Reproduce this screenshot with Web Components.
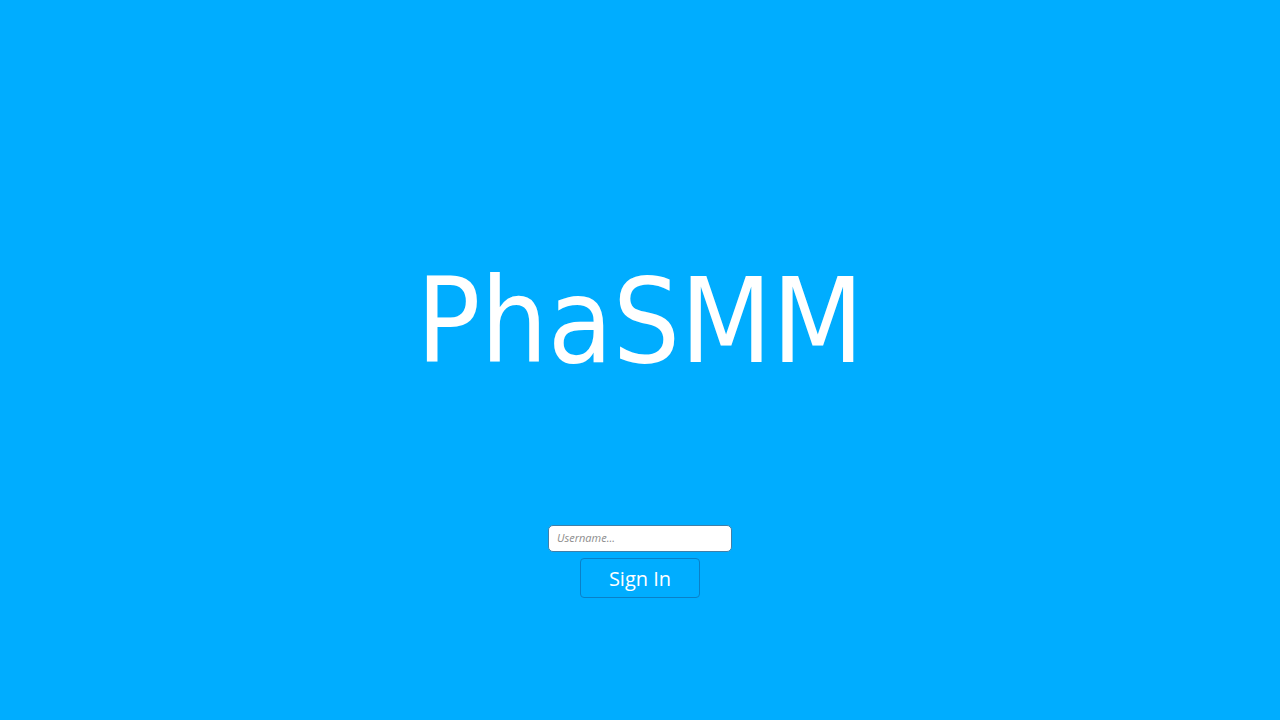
<!DOCTYPE html>
<html lang="en">
<head>
<meta charset="utf-8">
<meta name="viewport" content="width=device-width, initial-scale=1">
<title>PhaSMM</title>
<style>
  body { margin: 0; background: #00adff; font-family: "Open Sans", sans-serif; }
</style>
</head>
<body>
<login-screen>
  <brand-title slot="brand">PhaSMM</brand-title>
  <sign-in-form>Sign In</sign-in-form>
</login-screen>
<script>
class LoginScreen extends HTMLElement {
  constructor() {
    super();
    this.attachShadow({ mode: "open" }).innerHTML = `
      <style>
        :host { display: block; color: #fff; }
        main {
          box-sizing: border-box;
          min-height: 100vh;
          padding: 16px 16px 17vh;
          display: flex;
          flex-direction: column;
          align-items: center;
          justify-content: flex-end;
          gap: 140px;
        }
      </style>
      <main><slot name="brand"></slot><slot></slot></main>`;
  }
}
customElements.define("login-screen", LoginScreen);

class BrandTitle extends HTMLElement {
  constructor() {
    super();
    this.attachShadow({ mode: "open" }).innerHTML = `
      <style>
        :host { display: block; }
        h1 {
          margin: 0;
          font: 400 118px/128px "DejaVu Sans Condensed", "DejaVu Sans", sans-serif;
        }
      </style>
      <h1><slot></slot></h1>`;
  }
}
customElements.define("brand-title", BrandTitle);

class SignInForm extends HTMLElement {
  constructor() {
    super();
    this.attachShadow({ mode: "open" }).innerHTML = `
      <style>
        :host { display: block; }
        form { display: flex; flex-direction: column; align-items: center; gap: 6px; }
        input {
          box-sizing: border-box;
          width: 184px;
          height: 27px;
          padding: 0 8px 2px;
          border: 1px solid #3f7fa8;
          border-radius: 5px;
          background: #fff;
          color: #333;
          font: 11px "Open Sans", sans-serif;
        }
        input::placeholder { color: #8c8c8c; font-style: italic; opacity: 1; }
        button {
          box-sizing: border-box;
          width: 120px;
          height: 40px;
          padding: 2px 0 0;
          border: 1px solid #0a80c8;
          border-radius: 4px;
          background: transparent;
          color: inherit;
          font: 20px "Open Sans", sans-serif;
        }
      </style>
      <form>
        <input type="text" name="username" aria-label="Username" placeholder="Username...">
        <button type="button"><slot></slot></button>
      </form>`;
  }
}
customElements.define("sign-in-form", SignInForm);
</script>
</body>
</html>
